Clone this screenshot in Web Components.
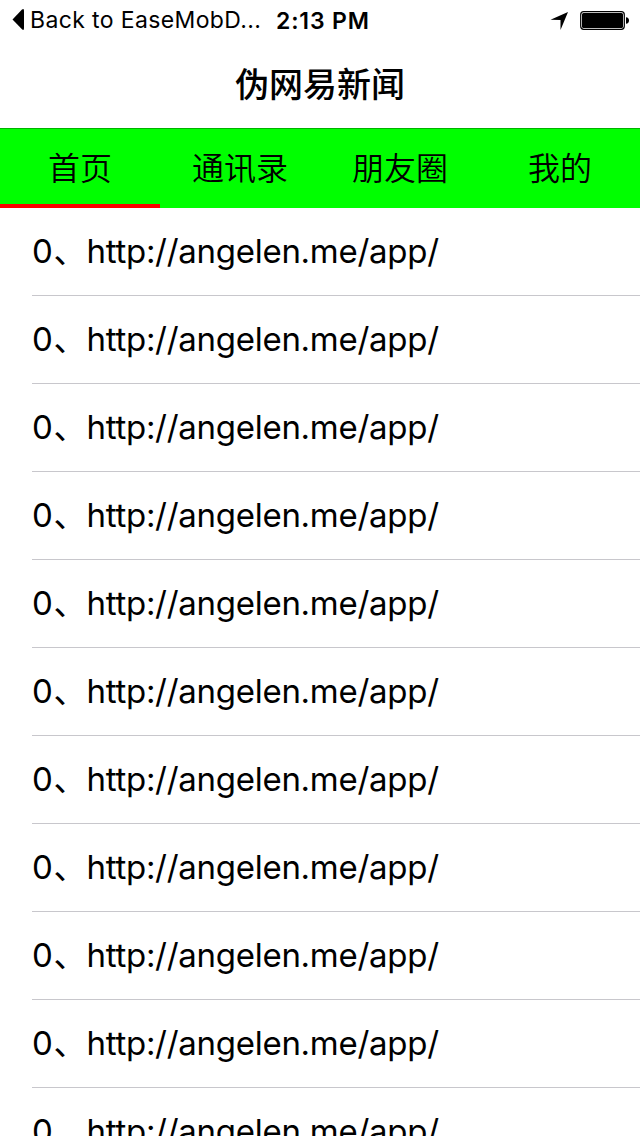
<!DOCTYPE html>
<html lang="zh-CN">
<head>
<meta charset="utf-8">
<title>伪网易新闻</title>
<style>
html, body { margin: 0; height: 100%; overflow: hidden; background: #fff; }
body { font-family: Inter, "Noto Sans CJK SC", sans-serif; color: #000; }
</style>
</head>
<body>
<news-app></news-app>
<script>
const define = (name, html) => {
  const template = document.createElement('template');
  template.innerHTML = html;
  customElements.define(name, class extends HTMLElement {
    constructor() {
      super();
      this.attachShadow({ mode: 'open' }).append(template.content.cloneNode(true));
    }
  });
};

define('status-bar', `
<style>
:host { display: flex; align-items: center; height: 40px; box-sizing: border-box; white-space: nowrap; padding-left: 12px; }
svg { display: block; flex: none; }
.back { width: 246px; margin-left: 5px; font-size: 23px; letter-spacing: .37px; line-height: 40px; }
.time { font-size: 23px; font-weight: 600; letter-spacing: .85px; line-height: 40px; margin-top: 1px; }
.right { margin-left: auto; }
</style>
<svg width="13" height="40"><path d="M0.5 19.5 10 9.5Q12 8 12 10.5V28Q12 31 10 29.2Z"/></svg>
<span class="back">Back to EaseMobD...</span>
<span class="time">2:13 PM</span>
<svg class="right" width="90" height="40">
<path d="M0.5 19.8 18 12 10.5 30V20Z"/>
<rect x="30.7" y="11.7" width="43.6" height="17.6" rx="3" fill="none" stroke="#000" stroke-width="1.2"/>
<rect x="32" y="13" width="41" height="15" rx="1.5"/>
<path d="M76 17.2Q79 17.6 79 20.5T76 23.8Z"/>
</svg>`);

define('nav-title', `
<style>
:host { display: flex; align-items: center; justify-content: center; height: 88px; font: 500 34px/86px "Noto Sans CJK SC", sans-serif; }
:host { align-items: flex-start; }
</style><slot></slot>`);

define('tab-strip', `
<style>
:host { display: grid; grid-template-columns: repeat(4, 1fr); height: 80px; box-sizing: border-box; background: #0f0; border-top: 1px solid #00b200; }
</style><slot></slot>`);

define('tab-item', `
<style>
:host { display: flex; justify-content: center; box-sizing: border-box; border-bottom: 4px solid transparent; height: 79px; font: 350 32px/74px "Noto Sans CJK SC", sans-serif; }
:host([selected]) { border-bottom-color: #f00; }
</style><slot></slot>`);

define('link-row', `
<style>
:host { display: block; height: 88px; box-sizing: border-box; margin-left: 32px; border-bottom: 1px solid #c8c7cc; font-size: 33px; line-height: 87px; letter-spacing: -.28px; white-space: nowrap; }
.num { display: inline-block; width: 54.5px; letter-spacing: .8px; }
</style><span class="num"><slot name="number"></slot></span><slot></slot>`);

define('news-list', `<style>:host { display: block; flex: 1; min-height: 0; overflow: hidden; }</style><slot></slot>`);

define('news-app', `
<style>
:host { display: flex; flex-direction: column; width: 640px; height: 1136px; overflow: hidden; }
status-bar, nav-title, tab-strip { flex: none; }
</style>
<status-bar></status-bar>
<nav-title>伪网易新闻</nav-title>
<tab-strip>
<tab-item selected>首页</tab-item><tab-item>通讯录</tab-item><tab-item>朋友圈</tab-item><tab-item>我的</tab-item>
</tab-strip>
<news-list>${'<link-row><span slot="number">0、</span>http://angelen.me/app/</link-row>'.repeat(11)}</news-list>`);
</script>
</body>
</html>
